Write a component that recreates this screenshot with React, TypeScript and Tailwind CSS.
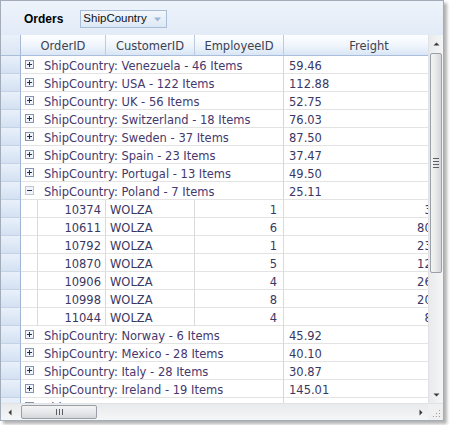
import React from 'react';

// Grouped orders grid (ShipCountry grouping, Poland expanded)

type Group = { country: string; count: number; freight: string; open?: boolean };
type Detail = { id: number; customer: string; employee: number; freight: string };

const before: Group[] = [
  { country: 'Venezuela', count: 46, freight: '59.46' },
  { country: 'USA', count: 122, freight: '112.88' },
  { country: 'UK', count: 56, freight: '52.75' },
  { country: 'Switzerland', count: 18, freight: '76.03' },
  { country: 'Sweden', count: 37, freight: '87.50' },
  { country: 'Spain', count: 23, freight: '37.47' },
  { country: 'Portugal', count: 13, freight: '49.50' },
  { country: 'Poland', count: 7, freight: '25.11', open: true },
];

const details: Detail[] = [
  { id: 10374, customer: 'WOLZA', employee: 1, freight: '3.94' },
  { id: 10611, customer: 'WOLZA', employee: 6, freight: '80.65' },
  { id: 10792, customer: 'WOLZA', employee: 1, freight: '23.79' },
  { id: 10870, customer: 'WOLZA', employee: 5, freight: '12.04' },
  { id: 10906, customer: 'WOLZA', employee: 4, freight: '26.29' },
  { id: 10998, customer: 'WOLZA', employee: 8, freight: '20.31' },
  { id: 11044, customer: 'WOLZA', employee: 4, freight: '8.72' },
];

const after: Group[] = [
  { country: 'Norway', count: 6, freight: '45.92' },
  { country: 'Mexico', count: 28, freight: '40.10' },
  { country: 'Italy', count: 28, freight: '30.87' },
  { country: 'Ireland', count: 19, freight: '145.01' },
  { country: 'Germany', count: 122, freight: '83.49' },
];

function Expander({ open }: { open?: boolean }) {
  return (
    <svg width="9" height="9" viewBox="0 0 9 9">
      <rect x="0.5" y="0.5" width="8" height="8" fill="#f1f5fb" stroke="#8494b0" strokeDasharray={open ? '1 1' : undefined} />
      <path d="M2 4.5h5" stroke="#22304f" />
      {!open && <path d="M4.5 2v5" stroke="#22304f" />}
    </svg>
  );
}

function RowHead() {
  return (
    <div className="w-[20px] shrink-0 h-full bg-gradient-to-b from-[#e9f0fa] to-[#d4e1f2] border-r border-r-[#9fb4d2] border-b border-b-[#c3d2e6]" />
  );
}

function GroupRow({ g }: { g: Group }) {
  return (
    <div className="flex h-[18px] shrink-0">
      <RowHead />
      <div className="w-[17px] shrink-0 flex items-center justify-center border-b border-[#e3e3e3]">
        <Expander open={g.open} />
      </div>
      <div className="w-[245px] shrink-0 pl-[6px] pt-[4px] flex items-center whitespace-nowrap border-b border-[#e3e3e3] text-[#45386e]">
        ShipCountry: {g.country} - {g.count} Items
      </div>
      <div className="w-[171px] shrink-0 pl-[5px] pt-[4px] flex items-center border-l border-l-[#d6d6d6] border-b border-[#e3e3e3] text-[#3a3763]">
        {g.freight}
      </div>
    </div>
  );
}

function DetailRow({ d }: { d: Detail }) {
  return (
    <div className="flex h-[18px] shrink-0 text-[#3a3763]">
      <RowHead />
      <div className="w-[17px] shrink-0 border-r border-r-[#dadada] border-b border-[#e3e3e3]" />
      <div className="w-[68px] shrink-0 pr-[4px] pt-[4px] flex items-center justify-end border-r border-r-[#dadada] border-b border-[#e3e3e3]">{d.id}</div>
      <div className="w-[89px] shrink-0 pl-[4px] pt-[4px] flex items-center border-r border-r-[#dadada] border-b border-[#e3e3e3]">{d.customer}</div>
      <div className="w-[89px] shrink-0 pr-[6px] pt-[4px] flex items-center justify-end border-r border-r-[#dadada] border-b border-[#e3e3e3]">{d.employee}</div>
      <div className="w-[170px] shrink-0 pr-[4px] pt-[4px] flex items-center justify-end border-b border-[#e3e3e3]">{d.freight}</div>
    </div>
  );
}

function Arrow({ dir }: { dir: 'up' | 'down' | 'left' | 'right' }) {
  const d = {
    up: 'M0.5 4.5L3.5 1.5L6.5 4.5Z',
    down: 'M0.5 2.5L3.5 5.5L6.5 2.5Z',
    left: 'M4.5 0.5L1.5 3.5L4.5 6.5Z',
    right: 'M2.5 0.5L5.5 3.5L2.5 6.5Z',
  }[dir];
  return (
    <svg width="7" height="7" viewBox="0 0 7 7">
      <path d={d} fill="#3c3c3c" />
    </svg>
  );
}

const headCell =
  'shrink-0 flex items-center justify-center pt-[4px] bg-gradient-to-b from-[#fdfeff] via-[#f1f6fc] to-[#d9e6f6] border-b border-b-[#a9bedb]';

export default function App() {
  return (
    <div className="w-[450px] h-[425px] bg-white font-['DejaVu_Sans',sans-serif] text-[11.5px] leading-none">
      <div className="w-[444px] h-[421px] border border-[#a3acb9] flex flex-col shadow-[3px_3px_3px_rgba(0,0,0,0.3)] bg-white">
        {/* toolbar */}
        <div className="h-[34px] shrink-0 flex items-center pt-[2px] bg-gradient-to-b from-[#eef3fb] to-[#e2ebf7] font-['Liberation_Sans',Arial,sans-serif]">
          <span className="ml-[23px] font-bold text-[12px] text-black">Orders</span>
          <div className="ml-[17px] w-[87px] h-[18px] border border-[#a8bdd8] bg-gradient-to-b from-[#f3f7fc] to-[#dde8f5] flex items-center pl-[2px] text-[11.5px] text-[#111]">
            ShipCountry
            <svg className="ml-auto mr-[5px]" width="7" height="5" viewBox="0 0 7 5">
              <path d="M0 0.5L3.5 4.5L7 0.5Z" fill="#9fb7d6" />
            </svg>
          </div>
        </div>

        <div className="flex h-[368px] shrink-0">
          {/* viewport */}
          <div className="w-[427px] shrink-0 overflow-hidden flex flex-col">
            <div className="flex h-[21px] shrink-0 text-[#3c4250]">
              <div className="w-[20px] shrink-0 bg-gradient-to-b from-[#eaf1fa] to-[#dbe6f4] border-r border-r-[#a6bad6] border-b border-b-[#a9bedb]" />
              <div className={`w-[85px] border-r border-r-[#bccbdf] ${headCell}`}>OrderID</div>
              <div className={`w-[89px] border-r border-r-[#bccbdf] ${headCell}`}>CustomerID</div>
              <div className={`w-[89px] border-r border-r-[#bccbdf] ${headCell}`}>EmployeeID</div>
              <div className={`w-[170px] ${headCell}`}>Freight</div>
            </div>
            {before.map((g) => <GroupRow key={g.country} g={g} />)}
            {details.map((d) => <DetailRow key={d.id} d={d} />)}
            {after.map((g) => <GroupRow key={g.country} g={g} />)}
          </div>

          {/* vertical scrollbar */}
          <div className="w-[15px] shrink-0 flex flex-col bg-gradient-to-r from-[#e9eaec] to-[#f5f6f7] border-l border-[#e0e2e6]">
            <div className="h-[18px] shrink-0 flex items-center justify-center"><Arrow dir="up" /></div>
            <div className="h-[220px] shrink-0 mx-[1px] rounded-[2px] border border-[#9a9ea6] bg-gradient-to-r from-[#f4f4f5] via-[#e7e8ea] to-[#d4d6d9] flex flex-col items-center justify-center gap-[2px]">
              <div className="w-[6px] h-px bg-[#5b5e66]" />
              <div className="w-[6px] h-px bg-[#5b5e66]" />
              <div className="w-[6px] h-px bg-[#5b5e66]" />
              <div className="w-[6px] h-px bg-[#5b5e66]" />
            </div>
            <div className="flex-1" />
            <div className="h-[17px] shrink-0 flex items-center justify-center"><Arrow dir="down" /></div>
          </div>
        </div>

        {/* horizontal scrollbar */}
        <div className="flex h-[17px] shrink-0 bg-gradient-to-b from-[#e9eaec] to-[#f5f6f7] border-t border-[#e0e2e6]">
          <div className="w-[18px] shrink-0 flex items-center justify-center"><Arrow dir="left" /></div>
          <div className="w-[76px] shrink-0 my-[1px] ml-[2px] rounded-[2px] border border-[#9a9ea6] bg-gradient-to-b from-[#f4f4f5] via-[#e7e8ea] to-[#d4d6d9] flex items-center justify-center gap-[2px]">
            <div className="w-px h-[6px] bg-[#5b5e66]" />
            <div className="w-px h-[6px] bg-[#5b5e66]" />
            <div className="w-px h-[6px] bg-[#5b5e66]" />
          </div>
          <div className="flex-1" />
          <div className="w-[15px] shrink-0 flex items-center justify-center"><Arrow dir="right" /></div>
          <div className="w-[15px] shrink-0 bg-[#f0f0f0] flex items-end justify-end p-[2px]">
            <svg width="8" height="8" viewBox="0 0 8 8">
              <rect x="6" y="0" width="1" height="1" fill="#9a9ea6" />
              <rect x="3" y="3" width="1" height="1" fill="#9a9ea6" />
              <rect x="6" y="3" width="1" height="1" fill="#9a9ea6" />
              <rect x="0" y="6" width="1" height="1" fill="#9a9ea6" />
              <rect x="3" y="6" width="1" height="1" fill="#9a9ea6" />
              <rect x="6" y="6" width="1" height="1" fill="#9a9ea6" />
            </svg>
          </div>
        </div>
      </div>
    </div>
  );
}
